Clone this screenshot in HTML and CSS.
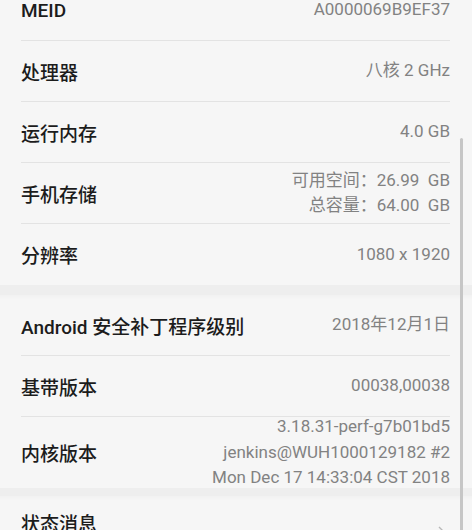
FILE: index.html
```html
<!DOCTYPE html>
<html lang="zh-CN">
<head>
    <meta charset="UTF-8">
    <meta name="viewport" content="width=device-width, initial-scale=1.0">
    <title>关于手机</title>
    <link rel="stylesheet" href="styles.css">
</head>
<body>
    <div class="screen">
        <div class="list">
            <div class="group">
                <div class="row">
                    <span class="label">MEID</span>
                    <span class="value">A0000069B9EF37</span>
                </div>
                <div class="row">
                    <span class="label">处理器</span>
                    <span class="value">八核 2 GHz</span>
                </div>
                <div class="row">
                    <span class="label">运行内存</span>
                    <span class="value">4.0 GB</span>
                </div>
                <div class="row">
                    <span class="label">手机存储</span>
                    <span class="value">可用空间：26.99&nbsp; GB<br>总容量：64.00&nbsp; GB</span>
                </div>
                <div class="row last">
                    <span class="label">分辨率</span>
                    <span class="value">1080 x 1920</span>
                </div>
            </div>

            <div class="group">
                <div class="row">
                    <span class="label">Android 安全补丁程序级别</span>
                    <span class="value">2018年12月1日</span>
                </div>
                <div class="row">
                    <span class="label">基带版本</span>
                    <span class="value">00038,00038</span>
                </div>
                <div class="row tall last">
                    <span class="label">内核版本</span>
                    <span class="value">3.18.31-perf-g7b01bd5<br>jenkins@WUH1000129182 #2<br>Mon Dec 17 14:33:04 CST 2018</span>
                </div>
            </div>

            <div class="group narrow">
                <div class="row last short">
                    <span class="label">状态消息</span>
                    <svg class="chevron" width="10" height="18" viewBox="0 0 10 18">
                        <path d="M1 1 L9 9 L1 17" fill="none" stroke="#b8b8b8" stroke-width="1.4"/>
                    </svg>
                </div>
            </div>
        </div>
        <div class="scrollbar"></div>
    </div>
</body>
</html>
```

FILE: styles.css
```css
html, body {
    margin: 0;
    padding: 0;
    background-color: #f6f6f6;
}
body {
    font-family: Roboto, "Noto Sans CJK SC", sans-serif;
    -webkit-font-smoothing: antialiased;
}
.screen {
    position: relative;
    width: 472px;
    height: 530px;
    overflow: hidden;
}
.list {
    margin-top: -20px;
}
.group {
    background-color: #f6f6f6;
}
.group + .group {
    border-top: 10px solid #eeeeee;
    box-shadow: inset 0 6px 6px -6px rgba(0,0,0,0.04);
}
.group.narrow {
    border-top-width: 8px;
}
.row {
    display: flex;
    align-items: center;
    justify-content: space-between;
    height: 60px;
    margin: 0 22px 0 21px;
    border-bottom: 1px solid #e3e3e3;
}
.row.last {
    border-bottom: none;
    height: 61px;
}
.row.tall {
    height: 71px;
}
.row.short {
    height: 52px;
}
.label {
    font-size: 19px;
    font-weight: 500;
    color: #1c1c1c;
}
.value {
    font-size: 17px;
    line-height: 25.5px;
    color: #828282;
    text-align: right;
}
.chevron {
    margin-top: 26px;
    margin-right: 2px;
}
.scrollbar {
    position: absolute;
    top: 138px;
    left: 460px;
    width: 3px;
    height: 400px;
    background-color: #c6c6c6;
    border-radius: 2px;
}
```
